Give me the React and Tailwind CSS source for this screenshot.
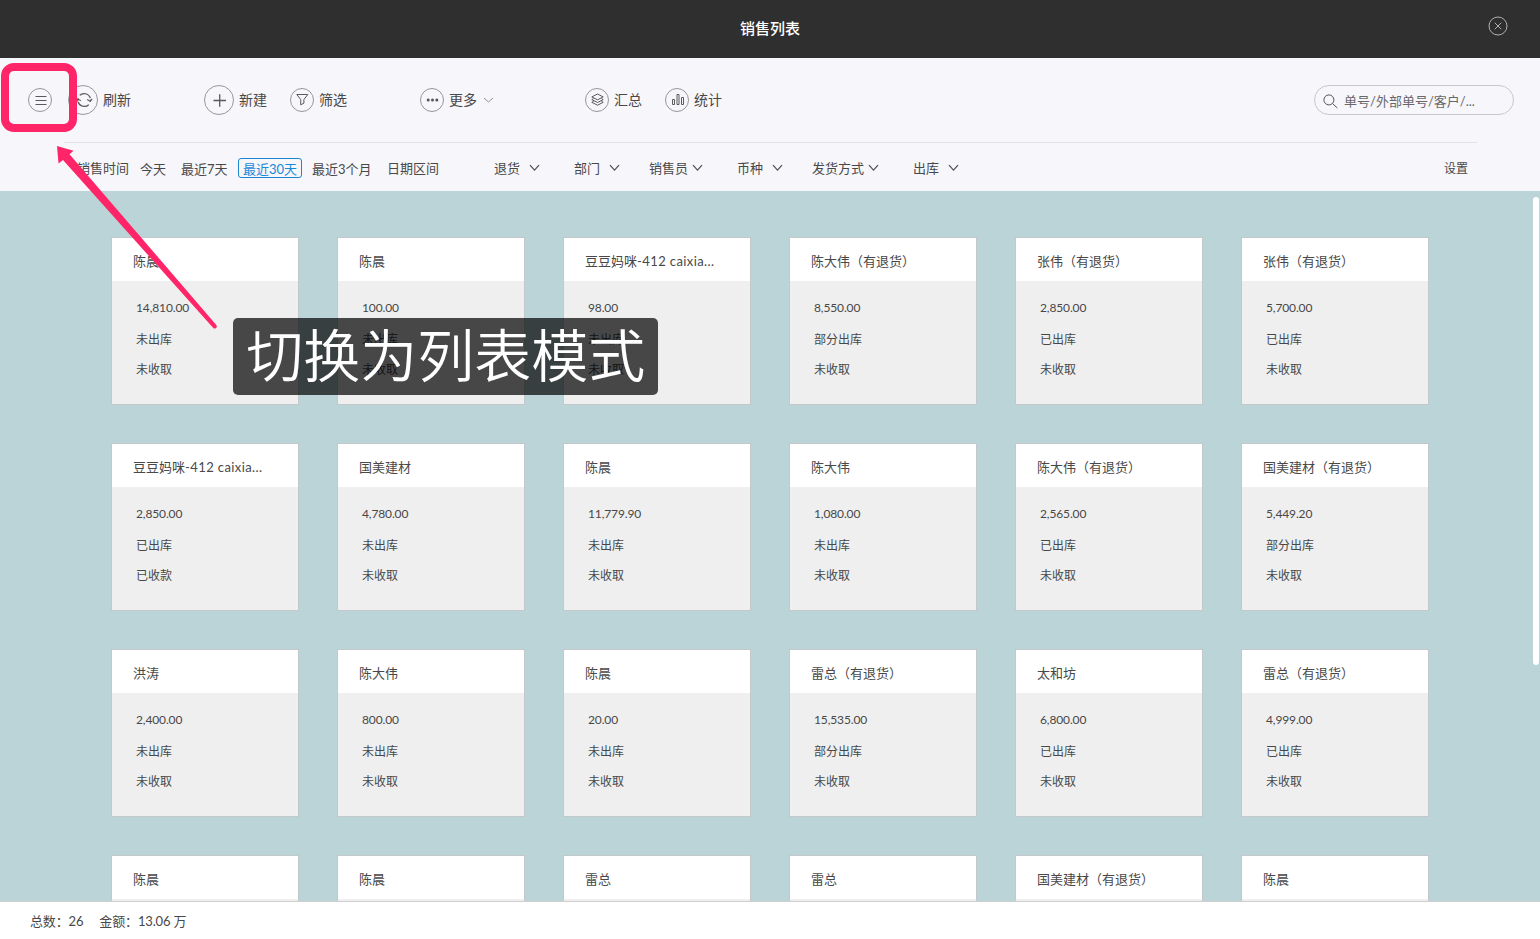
import React from "react";

const FONT = "font-['Lato','Noto_Sans_CJK_SC',sans-serif]";

const cards = [
  ["陈晨", "14,810.00", "未出库", "未收取"],
  ["陈晨", "100.00", "未出库", "未收取"],
  ["豆豆妈咪", "98.00", "未出库", "未收取", "-412 caixia..."],
  ["陈大伟（有退货）", "8,550.00", "部分出库", "未收取"],
  ["张伟（有退货）", "2,850.00", "已出库", "未收取"],
  ["张伟（有退货）", "5,700.00", "已出库", "未收取"],
  ["豆豆妈咪", "2,850.00", "已出库", "已收款", "-412 caixia..."],
  ["国美建材", "4,780.00", "未出库", "未收取"],
  ["陈晨", "11,779.90", "未出库", "未收取"],
  ["陈大伟", "1,080.00", "未出库", "未收取"],
  ["陈大伟（有退货）", "2,565.00", "已出库", "未收取"],
  ["国美建材（有退货）", "5,449.20", "部分出库", "未收取"],
  ["洪涛", "2,400.00", "未出库", "未收取"],
  ["陈大伟", "800.00", "未出库", "未收取"],
  ["陈晨", "20.00", "未出库", "未收取"],
  ["雷总（有退货）", "15,535.00", "部分出库", "未收取"],
  ["太和坊", "6,800.00", "已出库", "未收取"],
  ["雷总（有退货）", "4,999.00", "已出库", "未收取"],
  ["陈晨", "", "", ""],
  ["陈晨", "", "", ""],
  ["雷总", "", "", ""],
  ["雷总", "", "", ""],
  ["国美建材（有退货）", "", "", ""],
  ["陈晨", "", "", ""],
];

function Icon({ size = 24, children }) {
  return (
    <svg
      width={size}
      height={size}
      viewBox={`0 0 ${size} ${size}`}
      fill="none"
      stroke="#5a5a5a"
      strokeWidth="1"
      className="shrink-0"
    >
      <circle cx={size / 2} cy={size / 2} r={size / 2 - 0.5} stroke="#8b8b8e" strokeWidth="0.9" />
      {children}
    </svg>
  );
}

function Tool({ icon, label, children }) {
  return (
    <div className="flex items-center">
      {icon}
      <span className="ml-[5px] text-[14px] leading-5">{label}</span>
      {children}
    </div>
  );
}

function Chevron({ className, light }) {
  return (
    <svg width="11" height="8" viewBox="0 0 11 8" fill="none" stroke={light ? "#85858a" : "#505050"} strokeWidth={light ? 0.9 : 1.2} className={className}>
      <path d={light ? "M1 2l4.5 4L10 2" : "M1 1.2l4.5 5 4.5-5"} />
    </svg>
  );
}

function Dropdown({ label, tight }) {
  return (
    <div className={`flex items-center ${tight ? "gap-1" : "gap-[9px]"}`}>
      <span>{label}</span>
      <Chevron />
    </div>
  );
}

function Card({ data }) {
  const [name, amount, stock, paid, suffix] = data;
  return (
    <div className="h-[168px] w-[188px] border border-[#c3c9ca] bg-[#efefef]">
      <div className="h-[43px] bg-white pl-[21px] text-[13px] leading-[46px] whitespace-nowrap">
        {name}
        {suffix && <span className="tracking-[0.4px]">{suffix}</span>}
      </div>
      <div className="pt-[12px] pl-[24px] text-[12px]">
        <div className="h-8 leading-[30px] tracking-[-0.13px]">{amount}</div>
        <div className="h-[30px] leading-[30px]">{stock}</div>
        <div className="h-[30px] leading-[30px]">{paid}</div>
      </div>
    </div>
  );
}

export default function App() {
  return (
    <div className={`relative flex h-[939px] w-[1540px] flex-col overflow-hidden bg-white text-[#484848] ${FONT}`}>
      <header className="grid h-[58px] shrink-0 grid-cols-[1fr_auto_1fr] bg-[#2f2f2f]">
        <span />
        <h1 className="text-[15px] leading-[57px] font-medium text-white">销售列表</h1>
        <svg width="20" height="20" viewBox="0 0 20 20" fill="none" stroke="#b0b0b0" className="mt-4 mr-8 justify-self-end">
          <circle cx="10" cy="10" r="9" />
          <path d="M6.7 6.7l6.6 6.6M13.3 6.7l-6.6 6.6" />
        </svg>
      </header>

      <div className="h-[133px] shrink-0 bg-[#f6f6fb]">
        <div className="grid h-[84px] grid-cols-[40px_136px_86px_130px_165px_80px_1fr_200px] items-center pr-[26px] pl-7">
          <Icon>
            <path d="M7.5 8.5h11M7.5 12.5h11M7.5 16.5h11" />
          </Icon>
          <Tool
            label="刷新"
            icon={
              <Icon size={30}>
                <path d="M11.7 10.3A6.6 6.6 0 0 1 22.4 13M20.8 19.7A6.6 6.6 0 0 1 10.1 17" strokeWidth="1.2" />
                <path d="M10.2 13.2A6.6 6.6 0 0 0 9.8 16.6M22.3 16.8A6.6 6.6 0 0 0 22.7 14.6" strokeWidth="1.2" />
                <path d="M7.8 16.3l2.1-2.4 2.9 1.8M24.2 13.9l-2.1 2.4-2.9-1.8" strokeWidth="1.1" />
              </Icon>
            }
          />
          <Tool
            label="新建"
            icon={
              <Icon size={30}>
                <path d="M9.5 15.5h12.5M15.7 9.3v12.5" strokeWidth="1.3" />
              </Icon>
            }
          />
          <Tool
            label="筛选"
            icon={
              <Icon>
                <path d="M6.8 6.5h11L13.9 11.5v3.7l-3.2 1.6v-5.3z" />
              </Icon>
            }
          />
          <Tool
            label="更多"
            icon={
              <Icon>
                <g fill="#555" stroke="none">
                  <circle cx="8.2" cy="12" r="1.5" />
                  <circle cx="12.5" cy="12" r="1.5" />
                  <circle cx="16.8" cy="12" r="1.5" />
                </g>
              </Icon>
            }
          >
            <Chevron light className="ml-1.5" />
          </Tool>
          <Tool
            label="汇总"
            icon={
              <Icon>
                <path d="M12.5 6l5.7 2.9-5.7 2.9-5.7-2.9zM8.6 10.6l-1.8 1 5.7 2.9 5.7-2.9-1.8-1M8.6 13.3l-1.8 1 5.7 2.9 5.7-2.9-1.8-1" />
              </Icon>
            }
          />
          <Tool
            label="统计"
            icon={
              <Icon>
                <path d="M7.5 11.5h2v5h-2zM12 6.5h2v10h-2zM16.5 9.5h2v7h-2z" />
              </Icon>
            }
          />
          <div className="flex h-[30px] items-center rounded-full border border-[#c7c7cc] pl-2">
            <svg width="15" height="15" viewBox="0 0 15 15" fill="none" stroke="#555" className="mt-0.5">
              <circle cx="5.9" cy="5.9" r="5" />
              <path d="M9.5 9.5l4.8 4.5" />
            </svg>
            <span className="ml-1.5 pt-0.5 text-[13px] leading-5 text-[#68686b]">单号/外部单号/客户/...</span>
          </div>
        </div>
        <div className="ml-16 h-px w-[1413px] bg-[#e1e1e6]" />
        <div className="grid h-[48px] grid-cols-[63px_41px_57px_74px_75px_107px_80px_75px_88px_75px_101px_531px_auto] items-center pt-[2px] pl-[77px] text-[13px] leading-5 whitespace-nowrap">
          <span>销售时间</span>
          <span className="pt-0.5">今天</span>
          <span className="pt-0.5">最近7天</span>
          <span className="h-5 w-[64px] rounded-[3px] border border-[#1c86cc] text-center leading-[20px] text-[#1889d8]">最近30天</span>
          <span className="pt-0.5">最近3个月</span>
          <span>日期区间</span>
          <Dropdown label="退货" />
          <Dropdown label="部门" />
          <Dropdown label="销售员" tight />
          <Dropdown label="币种" />
          <Dropdown label="发货方式" tight />
          <Dropdown label="出库" />
          <span className="pt-0.5 text-[12px]">设置</span>
        </div>
      </div>

      <main className="flex h-[710px] shrink-0 items-start overflow-hidden bg-[#bbd4d8]">
        <div className="grid w-[1533px] shrink-0 grid-cols-[repeat(6,188px)] gap-[38px] pt-[46px] pl-[111px]">
          {cards.map((c, i) => (
            <Card key={i} data={c} />
          ))}
        </div>
        <div className="mt-1.5 h-[468px] w-[6px] shrink-0 rounded-full bg-white" />
      </main>

      <footer className="flex h-[38px] shrink-0 items-center border-t border-[#cfcfcf] bg-white pt-0.5 pl-[30px] text-[13px]">
        <span className="tracking-[-0.15px]">总数：26</span>
        <span className="ml-4 tracking-[-0.15px]">金额：13.06 万</span>
      </footer>

      <div className="absolute top-[63px] left-[1px] h-[69px] w-[75.5px] rounded-[13px] border-8 border-[#ff2568]" />
      <svg width="170" height="190" viewBox="0 0 170 190" className="absolute top-[142px] left-[52px]">
        <path d="M5 4L21.5 8.8 17.5 12.2 164.5 183.2Q165.3 185 163.8 186.2 162.2 187 161.3 186L11 18 6.5 21.5Z" fill="#ff2568" />
      </svg>
      <div className="absolute top-[318px] left-[233.3px] h-[77px] w-[425px] rounded-[5px] bg-black/70 text-center text-[57px] leading-[74px] font-[350] whitespace-nowrap text-white">
        切换为列表模式
      </div>
    </div>
  );
}
